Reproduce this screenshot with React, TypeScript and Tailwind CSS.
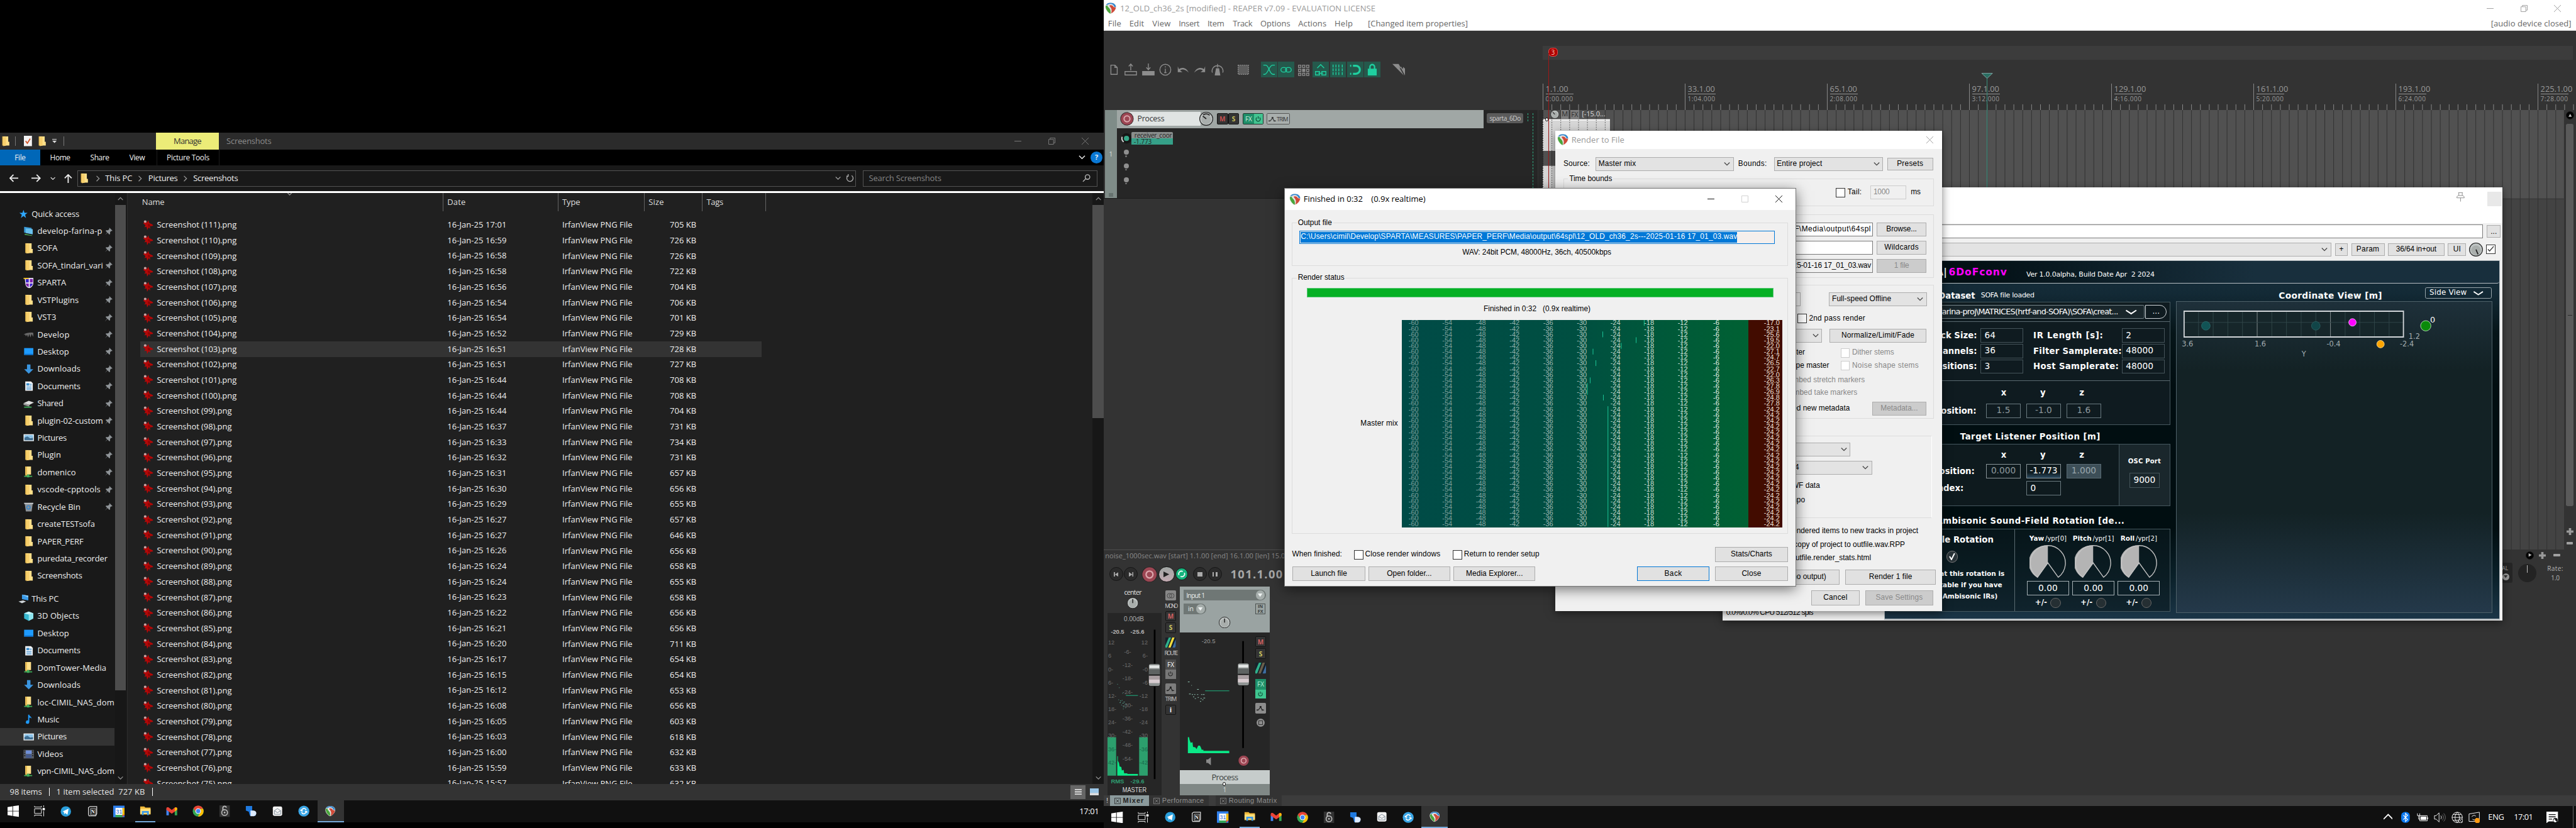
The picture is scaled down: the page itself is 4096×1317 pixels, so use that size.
import React, { useLayoutEffect, useRef } from "react";

type Kids = { children?: React.ReactNode; className?: string };

/* Text spread evenly over the width that its class gives. */
function T({ children, className = "" }: { children: string; className?: string }) {
  const outer = useRef<HTMLSpanElement>(null);
  const inner = useRef<HTMLSpanElement>(null);
  useLayoutEffect(() => {
    const o = outer.current;
    const i = inner.current;
    if (!o || !i) return;
    i.style.letterSpacing = "0px";
    const box = o.getBoundingClientRect().width;
    const k = box / parseFloat(getComputedStyle(o).width);
    const d = (box - i.getBoundingClientRect().width) / k;
    i.style.letterSpacing = `${d / children.length}px`;
  }, [children]);
  return (
    <span ref={outer} className={"inline-block shrink-0 whitespace-pre leading-none " + className}>
      <span ref={inner} className="inline-block">
        {children}
      </span>
    </span>
  );
}

/* ------------------------------------------------------------------ icons */

function ReaperLogo({ className = "" }: Kids) {
  return (
    <svg viewBox="0 0 20 20" className={"shrink-0 " + className}>
      <path d="M10 0C4 0 0.5 3 0.5 8c0 5 4.5 10 9 12 5-2 10-7 10-12 0-5-4-8-9.500-8z" fill="#e4e4e4" />
      <path d="M10 .5C5.500 .5 2.500 2.200 1.500 5l5-2c5-1.500 9 1 9.500 4.500l3 .5c0-4.500-4-7.500-9-7.500z" fill="#2f86d0" />
      <path d="M1 6C1 12 5 17 9.500 19.500c1-5-.5-8.500-4-11.500-1.500-1.500-1-2.500 0-3.200z" fill="#4aa63c" />
      <path d="M8 5c-1 1.500 3 3.500 3.500 7.500.3 2.500-.3 4.500-1 6.500 4.500-2 8-6 8.300-10.500L15 8c-1-3-4-4-7-3z" fill="#d04a38" />
    </svg>
  );
}

function Folder({ className = "" }: Kids) {
  return (
    <svg viewBox="0 0 18 20" className={"shrink-0 " + className}>
      <path d="M3 1h7v17H3z" fill="#e9bd55" />
      <path d="M5 1h9v10h2v7H5z" fill="#ffe08a" />
      <path d="M5 3l5-2v17l-5 1z" fill="#f7cf6c" />
    </svg>
  );
}

function NavIcon({ kind }: { kind: string }) {
  const cls = "h-5 w-[19px] shrink-0";
  switch (kind) {
    case "star":
      return (
        <svg viewBox="0 0 18 18" className="h-[18px] w-4 shrink-0">
          <path d="M9 1l2 6h6l-4.800 3.700L14 17l-5-3.900L4 17l1.800-6.300L1 7h6z" fill="#2ea8ff" />
        </svg>
      );
    case "folder":
      return <Folder className={cls} />;
    case "foldernet":
      return (
        <svg viewBox="0 0 18 20" className={cls}>
          <path d="M3 0h10v14H3z" fill="#ffe08a" />
          <path d="M3 0h3v16H3z" fill="#e9bd55" />
          <path d="M1 16h14v2H1zM6 14h4v5H6z" fill="#3fae5a" />
        </svg>
      );
    case "net":
      return (
        <svg viewBox="0 0 18 20" className={cls}>
          <path d="M1 3l13 2v10L1 13z" fill="#3b9bd8" />
          <path d="M4 6l12 1v9l-12-2z" fill="#69c0ec" />
          <path d="M2 15l13 3v1L2 17z" fill="#4fb35a" />
        </svg>
      );
    case "shield":
      return (
        <svg viewBox="0 0 18 20" className={cls}>
          <path d="M2 1h15v9c0 5-4 8-7 9-4-1-7-4-7-9z" fill="#e8e0f0" />
          <path d="M4 3h5v6H4zM11 11h5c-.5 3-3 5-5 6z" fill="#3a22c8" />
          <path d="M11 3h5v6h-5zM4 11h5v6c-3-1-5-3-5-6z" fill="#7a1fae" />
          <path d="M0 1h9v2H0z" fill="#f0c020" />
        </svg>
      );
    case "drive":
      return (
        <svg viewBox="0 0 18 20" className={cls}>
          <path d="M0 10c4-3 12-4 17-3v7l-3-5-2 6-2-6-2 6-2-5-2 3-1-3z" fill="#6a6a6a" />
        </svg>
      );
    case "desktop":
      return (
        <svg viewBox="0 0 18 20" className={cls}>
          <path d="M1 4h16v12H1z" fill="#1e9bff" />
          <path d="M1 14h16v2H1z" fill="#0d6fc9" />
        </svg>
      );
    case "download":
      return (
        <svg viewBox="0 0 18 20" className={cls}>
          <path d="M6 2h6v8h5l-8 8-8-8h5z" fill="#3b96e0" />
        </svg>
      );
    case "doc":
      return (
        <svg viewBox="0 0 18 20" className={cls}>
          <path d="M3 2h10l3 3v13H3z" fill="#f4f6f8" />
          <path d="M5 5h5v4H5zM11 6h3v1h-3zM5 11h9v1H5zM5 13h9v1H5zM5 15h9v1H5zM11 8h3v1h-3z" fill="#3c8fcf" />
        </svg>
      );
    case "shared":
      return (
        <svg viewBox="0 0 18 20" className={cls}>
          <path d="M0 9l9-4 9 3-8 4z" fill="#dcdcdc" />
          <path d="M0 9l10 3v3L0 12z" fill="#9b9b9b" />
          <path d="M1 15h13v2H1z" fill="#3fae5a" />
        </svg>
      );
    case "pics":
      return (
        <svg viewBox="0 0 18 20" className={cls}>
          <path d="M0 4h18v12H0z" fill="#eef4f8" />
          <path d="M1.500 5.500h15v5h-15z" fill="#8cc4ea" />
          <path d="M1.500 10l5-2 5 3 5-1v4.500h-15z" fill="#3d6d92" />
        </svg>
      );
    case "bin":
      return (
        <svg viewBox="0 0 18 20" className={cls}>
          <path d="M2 4h14l-2 14H4z" fill="#8c9298" />
          <path d="M1 3h16v2H1z" fill="#c9ced2" />
          <circle cx="8.500" cy="11" r="3" fill="none" stroke="#2f86d0" strokeWidth="1.500" />
        </svg>
      );
    case "pc":
      return (
        <svg viewBox="0 0 18 20" className={cls}>
          <path d="M6 3l11 2v8L6 11z" fill="#3b9be8" />
          <path d="M6 3l11 2v3z" fill="#8fd0ff" />
          <path d="M0 15l8-2 5 2-7 3z" fill="#d0d6da" />
        </svg>
      );
    case "cube":
      return (
        <svg viewBox="0 0 18 20" className={cls}>
          <path d="M9 2l8 3v9l-8 4-8-4V5z" fill="#36b7cf" />
          <path d="M9 7l8-2v9l-8 4z" fill="#8ce4ef" />
          <path d="M1 5l8-3 8 3-8 2z" fill="#c6f3f7" />
        </svg>
      );
    case "music":
      return (
        <svg viewBox="0 0 18 20" className={cls}>
          <path d="M8 2h2c0 3 4 3 4 7-1-2-2-2-4-2v8a3 3 0 1 1-2-3z" fill="#1e9bff" />
        </svg>
      );
    default:
      return (
        <svg viewBox="0 0 18 20" className={cls}>
          <path d="M0 3h18v15H0z" fill="#5a5f66" />
          <path d="M4 4h10v6H4z" fill="#6f8fd8" />
          <path d="M4 11h10v6H4z" fill="#43598c" />
          <path d="M1 4h2v2H1zM1 8h2v2H1zM1 12h2v2H1zM15 4h2v2h-2zM15 8h2v2h-2zM15 12h2v2h-2z" fill="#222" />
        </svg>
      );
  }
}

function Pin() {
  return (
    <svg viewBox="0 0 14 14" className="h-[13px] w-[13px] shrink-0">
      <path d="M8 0l6 6-1.500.5-1-.3-2 2.300V12L8 13 4.800 9.500 0 14l4-5L1 6l1.500-1h3L8 3z" fill="#8f9498" />
    </svg>
  );
}

function Splat() {
  return (
    <svg viewBox="0 0 20 20" className="h-5 w-[19px] shrink-0">
      <path d="M3 3l5 2 2-4 2 5 6 3 1 2-6 1 1 5-3-3-3 5-1-6-4 1 2-4-4-3z" fill="#b40808" />
      <path d="M9 8l4 0 1 4-4 1z" fill="#8c0404" />
      <circle cx="4.500" cy="3.500" r="2.400" fill="#c9a0a0" />
    </svg>
  );
}

function Chevron({ className = "", d = "M1 3l5 5 5-5" }: { className?: string; d?: string }) {
  return (
    <svg viewBox="0 0 12 12" className={"shrink-0 fill-none " + className}>
      <path d={d} stroke="currentColor" strokeWidth="1.500" />
    </svg>
  );
}

function WinButtons({ className = "" }: Kids) {
  return (
    <div className={"flex items-center " + className}>
      <svg viewBox="0 0 12 12" className="h-3 w-3 fill-none stroke-current">
        <path d="M0 6h12" />
      </svg>
      <svg viewBox="0 0 12 12" className="ml-[47px] h-3 w-3 fill-none stroke-current">
        <path d="M.5 3h8.500v8.500H.5zM3 3V.5h8.500V9H9" />
      </svg>
      <svg viewBox="0 0 12 12" className="ml-[46px] h-3 w-3 fill-none stroke-current">
        <path d="M0 0l12 12M12 0L0 12" />
      </svg>
    </div>
  );
}

/* ---------------------------------------------------------------- taskbar */

const appIcons: React.ReactNode[] = [
  <svg key="win" viewBox="0 0 20 20" className="h-5 w-5">
    <path d="M0 3l8.500-1.300V9.500H0zM9.500 1.500L20 0v9.500H9.500zM0 10.500h8.500v7.800L0 17zM9.500 10.500H20V20L9.500 18.500z" fill="#fff" />
  </svg>,
  <svg key="view" viewBox="0 0 20 20" className="h-5 w-5 fill-none stroke-white">
    <path d="M1 6h12v8H1zM1 1v2h12V1M1 19v-2h12v2M17 0v3M17 10v9" />
    <path d="M15.500 5h3v3h-3z" fill="#fff" />
  </svg>,
  <svg key="tg" viewBox="0 0 20 20" className="h-[19px] w-[19px]">
    <circle cx="10" cy="10" r="9.500" fill="#2a9fdc" />
    <path d="M4 10l11-5-2 11-4-3-2 2-.5-4z" fill="#fff" />
  </svg>,
  <svg key="notion" viewBox="0 0 20 20" className="h-[18px] w-[18px]">
    <path d="M2 3l3-2h13v14l-2 4H3l-1-3z" fill="#111" stroke="#ddd" strokeWidth="1.500" />
    <path d="M6 5h10v12H6z" fill="none" stroke="#ddd" />
    <text x="7" y="15" fontSize="10" fontFamily="Liberation Serif, serif" fontWeight="700" fill="#fff">N</text>
  </svg>,
  <svg key="cal" viewBox="0 0 20 20" className="h-[21px] w-[20px]">
    <path d="M0 0h20v20H0z" fill="#2f80ed" />
    <path d="M16 4h4v12h-4z" fill="#fbbc04" />
    <path d="M4 16h12v4H4z" fill="#34a853" />
    <path d="M16 16h4l-4 4z" fill="#ea4335" />
    <path d="M4 4h12v12H4z" fill="#fff" />
    <text x="5" y="13.500" fontSize="9.500" fontFamily="Liberation Sans, sans-serif" fill="#1a66d6">31</text>
  </svg>,
  <svg key="folder" viewBox="0 0 20 20" className="h-[20px] w-[20px]">
    <path d="M1 3h7l2 2h9v12H1z" fill="#f0b93a" />
    <path d="M1 7h18v9H1z" fill="#ffdf7a" />
    <path d="M4 11h12v7h-3v-4H7v4H4z" fill="#3c9be8" />
  </svg>,
  <svg key="gmail" viewBox="0 0 20 16" className="h-[15px] w-[20px]">
    <path d="M0 3h4.500v12H0z" fill="#4285f4" />
    <path d="M15.500 3H20v12h-4.500z" fill="#34a853" />
    <path d="M0 2c0-2 3-3 4.500-1.500L10 5l5.500-4.500C17 -1 20 0 20 2v3l-10 7L0 5z" fill="#ea4335" />
    <path d="M15.500 1c2-1.600 4.500-.5 4.500 1.500v2L15.500 8z" fill="#fbbc04" />
  </svg>,
  <svg key="chrome" viewBox="0 0 20 20" className="h-[20px] w-[20px]">
    <circle cx="10" cy="10" r="9.500" fill="#34a853" />
    <path d="M10 .5A9.500 9.500 0 0 1 18.500 6H10L6 12 1.800 5.200A9.500 9.500 0 0 1 10 .5z" fill="#ea4335" />
    <path d="M18.500 6a9.500 9.500 0 0 1-9 13.500L14 12V6z" fill="#fbbc04" />
    <circle cx="10" cy="10" r="4.800" fill="#fff" />
    <circle cx="10" cy="10" r="3.600" fill="#4285f4" />
  </svg>,
  <svg key="lock" viewBox="0 0 20 20" className="h-[20px] w-[20px] fill-none">
    <path d="M1 0h18v20H1z" fill="#333" />
    <path d="M7 8V5a3 3 0 0 1 6-1" stroke="#bbb" strokeWidth="2" />
    <circle cx="10" cy="12.500" r="5" stroke="#bbb" strokeWidth="1.800" />
    <circle cx="10" cy="12.500" r="1.500" fill="#bbb" />
  </svg>,
  <svg key="bird" viewBox="0 0 20 20" className="h-[20px] w-[20px]">
    <path d="M1 1h11v8l6 3v6H8l-2-7-5-2z" fill="#1f7ae0" />
    <path d="M9 9h4c4 0 7 2 6 6-1 3-3 4-6 4H9z" fill="#dceaff" />
  </svg>,
  <svg key="mail" viewBox="0 0 20 20" className="h-[18px] w-[18px]">
    <rect x="1" y="1" width="18" height="18" rx="3" fill="#f4f4f4" />
    <path d="M4 9l6-4 6 4v7H4zM4 9l6 4 6-4" fill="none" stroke="#6a7a88" />
  </svg>,
  <svg key="blue" viewBox="0 0 20 20" className="h-[20px] w-[20px] fill-none">
    <circle cx="10" cy="10" r="9.500" fill="#3aa6e6" />
    <path d="M5 10c3-6 7-6 9-2M15 10c-3 6-7 6-9 2M4 8l4 2M16 12l-4-2" stroke="#fff" strokeWidth="1.800" />
  </svg>,
  <ReaperLogo key="reaper" className="h-[20px] w-[18px]" />,
];

function Taskbar({ className = "", children }: Kids) {
  return (
    <div className={"flex items-stretch bg-[#101010] " + className}>
      {appIcons.map((icon, i) => (
        <div
          key={i}
          className={
            "flex w-[46px] shrink-0 flex-col items-center justify-center " +
            (i === 12 ? "border-b-[3px] border-[#76a9da] bg-[#333]" : "")
          }
        >
          <div className={"flex flex-1 items-center " + (i === 12 ? "pt-[2px]" : "")}>{icon}</div>
          {i === 5 && <div className="h-[3px] w-[35px] bg-[#76a9da]" />}
        </div>
      ))}
      <div className="flex-1" />
      {children}
    </div>
  );
}

/* --------------------------------------------------------------- explorer */

const nav: [string, string, string, boolean][] = [
  ["net", "develop-farina-p", "w-[113px]", true],
  ["folder", "SOFA", "w-[35px]", true],
  ["folder", "SOFA_tindari_vari", "w-[114px]", true],
  ["shield", "SPARTA", "w-[50px]", true],
  ["folder", "VSTPlugins", "w-[72px]", true],
  ["folder", "VST3", "w-[33px]", true],
  ["drive", "Develop", "w-[56px]", true],
  ["desktop", "Desktop", "w-[55px]", true],
  ["download", "Downloads", "w-[75px]", true],
  ["doc", "Documents", "w-[75px]", true],
  ["shared", "Shared", "w-[45px]", true],
  ["folder", "plugin-02-custom", "w-[114px]", true],
  ["pics", "Pictures", "w-[51px]", true],
  ["folder", "Plugin", "w-[41px]", true],
  ["foldernet", "domenico", "w-[67px]", true],
  ["folder", "vscode-cpptools", "w-[110px]", true],
  ["bin", "Recycle Bin", "w-[75px]", true],
  ["folder", "createTESTsofa", "w-[100px]", false],
  ["folder", "PAPER_PERF", "w-[80px]", false],
  ["folder", "puredata_recorder", "w-[122px]", false],
  ["folder", "Screenshots", "w-[78px]", false],
];
const pcNav: [string, string, string][] = [
  ["cube", "3D Objects", "w-[73px]"],
  ["desktop", "Desktop", "w-[55px]"],
  ["doc", "Documents", "w-[75px]"],
  ["foldernet", "DomTower-Media", "w-[120px]"],
  ["download", "Downloads", "w-[75px]"],
  ["foldernet", "loc-CIMIL_NAS_dom", "w-[134px]"],
  ["music", "Music", "w-[38px]"],
  ["pics", "Pictures", "w-[51px]"],
  ["video", "Videos", "w-[45px]"],
  ["foldernet", "vpn-CIMIL_NAS_dom", "w-[134px]"],
];
const files: [string, number][] = [
  ["17:01", 705], ["16:59", 726], ["16:58", 726], ["16:58", 722], ["16:56", 704], ["16:54", 706],
  ["16:54", 701], ["16:52", 729], ["16:51", 728], ["16:51", 727], ["16:44", 708], ["16:44", 708],
  ["16:44", 704], ["16:37", 731], ["16:33", 734], ["16:32", 731], ["16:31", 657], ["16:30", 656],
  ["16:29", 655], ["16:27", 657], ["16:27", 646], ["16:26", 656], ["16:24", 658], ["16:24", 655],
  ["16:23", 658], ["16:22", 656], ["16:21", 656], ["16:20", 711], ["16:17", 654], ["16:15", 654],
  ["16:12", 653], ["16:08", 656], ["16:05", 603], ["16:03", 618], ["16:00", 632], ["15:59", 633],
  ["15:57", 632],
];

function Explorer() {
  return (
    <div className="flex h-[1161px] w-[1920px] flex-col bg-[#202020] text-[14.2px] text-[#f0f0f0]">
      <div className="flex h-[29px] shrink-0 items-center bg-[#2b2b2b]">
        <Folder className="ml-px h-[19px] w-[17px]" />
        <div className="ml-[8px] h-[16px] w-px bg-[#777]" />
        <svg viewBox="0 0 14 18" className="ml-[15px] h-[18px] w-[14px]">
          <path d="M0 0h14v18H0z" fill="#f3f3f3" />
          <path d="M3 9l3 4 5-8" fill="none" stroke="#d2572c" strokeWidth="2" />
        </svg>
        <Folder className="ml-[9px] h-[19px] w-[17px]" />
        <svg viewBox="0 0 8 8" className="ml-[9px] h-2 w-2">
          <path d="M0 0h8v1H0zM0 3h8L4 7z" fill="#ddd" />
        </svg>
        <div className="ml-[12px] h-[16px] w-px bg-[#777]" />
        <div className="ml-[159px] flex h-full w-[110px] items-center justify-center bg-[#ecec78] text-[#333]">
          <T className="w-[48px]">Manage</T>
        </div>
        <T className="ml-[13px] w-[78px] text-[#8c8c8c]">Screenshots</T>
        <div className="flex-1" />
        <WinButtons className="mr-[27px] text-[#808080]" />
      </div>
      <div className="flex h-[28px] shrink-0 items-center bg-black text-[13px]">
        <div className="flex h-full w-[70px] items-center justify-center bg-[#0067b8]">
          <T className="w-[19px]">File</T>
        </div>
        <T className="ml-[17px] w-[35px]">Home</T>
        <T className="ml-[35px] w-[33px]">Share</T>
        <T className="ml-[35px] w-[27px]">View</T>
        <div className="ml-[20px] flex h-full w-[110px] items-center justify-center border-x border-[#1c1c1c]">
          <T className="w-[74px]">Picture Tools</T>
        </div>
        <div className="flex-1" />
        <Chevron className="mr-[9px] h-3 w-3" />
        <div className="mr-[3px] flex h-5 w-5 items-center justify-center rounded-full bg-[#0a78d4] text-[12px] font-bold">?</div>
      </div>
      <div className="flex h-[45px] shrink-0 items-center bg-[#191919]">
        <svg viewBox="0 0 16 14" className="ml-[16px] h-[14px] w-[16px] fill-none stroke-[#eee] stroke-2">
          <path d="M16 7H1M7 1L1 7l6 6" />
        </svg>
        <svg viewBox="0 0 16 14" className="ml-[23px] h-[14px] w-[16px] fill-none stroke-[#eee] stroke-2">
          <path d="M0 7h15M9 1l6 6-6 6" />
        </svg>
        <Chevron className="ml-[17px] h-[9px] w-[9px]" />
        <svg viewBox="0 0 14 16" className="ml-[15px] h-[16px] w-[14px] fill-none stroke-[#eee] stroke-2">
          <path d="M7 16V1M1 7l6-6 6 6" />
        </svg>
        <div className="ml-[9px] flex h-[28px] w-[1354px] items-center border border-[#535353]">
          <Folder className="ml-[2px] h-[19px] w-[17px]" />
          <Chevron className="ml-[10px] h-[11px] w-[11px] text-[#999]" d="M3 1l5 5-5 5" />
          <T className="ml-[7px] w-[47px]">This PC</T>
          <Chevron className="ml-[9px] h-[11px] w-[11px] text-[#999]" d="M3 1l5 5-5 5" />
          <T className="ml-[8px] w-[51px]">Pictures</T>
          <Chevron className="ml-[8px] h-[11px] w-[11px] text-[#999]" d="M3 1l5 5-5 5" />
          <T className="ml-[8px] w-[78px]">Screenshots</T>
          <div className="flex-1" />
          <Chevron className="h-[10px] w-[10px] text-[#aaa]" />
          <svg viewBox="0 0 14 14" className="ml-[8px] mr-[3px] h-[14px] w-[14px] fill-none stroke-[#aaa] stroke-[1.5]">
            <path d="M10 2.500A5.500 5.500 0 1 1 4 2.600M4 0v3.500h-3" />
          </svg>
        </div>
        <div className="ml-[12px] flex h-[28px] w-[408px] items-center border border-[#535353] text-[#858585]">
          <T className="ml-[9px] w-[126px]">Search Screenshots</T>
          <div className="flex-1" />
          <svg viewBox="0 0 14 14" className="mr-[11px] h-[14px] w-[14px] fill-none stroke-[#bbb] stroke-[1.5]">
            <circle cx="9" cy="5" r="4" />
            <path d="M6 8l-5 5" />
          </svg>
        </div>
      </div>
      <div className="h-[3px] shrink-0 bg-white" />
      <div className="flex h-[1028px] shrink-0">
        <div className="flex w-[200px] shrink-0 flex-col bg-[#191919] pt-[21px]">
          <div className="flex h-[30px] shrink-0 items-center pl-[33px]">
            <NavIcon kind="star" />
            <T className="ml-[6px] w-[83px]">Quick access</T>
          </div>
          {nav.map(([kind, name, width, pinned]) => (
            <div key={name} className="flex h-[30px] shrink-0 items-center pl-[41px] pr-[4px]">
              <NavIcon kind={kind} />
              <T className={"ml-[5px] " + width}>{name}</T>
              <div className="flex-1" />
              {pinned && <Pin />}
            </div>
          ))}
          <div className="mt-[10px] flex h-[30px] shrink-0 items-center pl-[32px]">
            <NavIcon kind="pc" />
            <T className="ml-[4px] w-[47px]">This PC</T>
          </div>
          {pcNav.map(([kind, name, width]) => (
            <div
              key={name}
              className={"flex h-[30px] w-[199px] shrink-0 items-center pl-[41px] " + (name === "Pictures" ? "bg-[#333]" : "")}
            >
              <NavIcon kind={kind} />
              <T className={"ml-[5px] " + width}>{name}</T>
            </div>
          ))}
        </div>
        <div className="flex w-[19px] shrink-0 flex-col items-center bg-[#171717] text-[#999]">
          <div className="flex h-[21px] items-center"><Chevron className="h-[10px] w-[10px]" d="M1 8l5-5 5 5" /></div>
          <div className="h-[844px] w-full bg-[#4d4d4d]" />
          <div className="flex-1" />
          <div className="flex h-[21px] items-center"><Chevron className="h-[10px] w-[10px]" /></div>
        </div>
        <div className="w-[3px] shrink-0 border-r border-[#2d2d2d] bg-[#191919]" />
        <div className="flex w-[1678px] flex-col overflow-hidden">
          <div className="flex h-[32px] shrink-0 items-center text-[#dedede]">
            <T className="ml-[25px] w-[39px]">Name</T>
            <Chevron className="ml-[213px] mb-[28px] h-[10px] w-[10px] text-[#999]" />
            <div className="ml-[261px] h-full w-px bg-[#636363]" />
            <T className="ml-[7px] w-[32px]">Date</T>
            <div className="ml-[160px] h-full w-px bg-[#636363]" />
            <T className="ml-[7px] w-[31px]">Type</T>
            <div className="ml-[111px] h-full w-px bg-[#636363]" />
            <T className="ml-[7px] w-[27px]">Size</T>
            <div className="ml-[66px] h-full w-px bg-[#636363]" />
            <T className="ml-[7px] w-[29px]">Tags</T>
            <div className="ml-[73px] h-full w-px bg-[#636363]" />
          </div>
          <div className="h-[10px] shrink-0" />
          {files.map(([time, size], i) => (
            <div
              key={i}
              className={"ml-[22px] flex h-[27px] w-[1081px] shrink-0 items-center " + (i === 8 ? "bg-[#333]" : "")}
            >
              <div className="ml-[4px] flex w-[530px] items-center">
                <Splat />
                <T className={"ml-[6px] " + (i < 12 ? "w-[138.500px]" : "w-[130px]")}>{`Screenshot (${111 - i}).png`}</T>
              </div>
              <div className="w-[200px]"><T className="w-[103px]">{`16-Jan-25 ${time}`}</T></div>
              <T className="w-[122px]">IrfanView PNG File</T>
              <div className="flex w-[111px] justify-end"><T className="w-[46px]">{`${size} KB`}</T></div>
            </div>
          ))}
        </div>
        <div className="flex w-[20px] shrink-0 flex-col items-center bg-[#171717] text-[#999]">
          <div className="flex h-[21px] items-center"><Chevron className="h-[10px] w-[10px]" d="M1 8l5-5 5 5" /></div>
          <div className="h-[370px] w-full bg-[#4d4d4d]" />
          <div className="flex-1" />
          <div className="flex h-[21px] items-center"><Chevron className="h-[10px] w-[10px]" /></div>
        </div>
      </div>
      <div className="z-10 flex h-[28px] shrink-0 items-center bg-[#333] text-[#e4e4e4]">
        <T className="ml-[17px] w-[56px]">98 items</T>
        <div className="ml-[12px] h-[14px] w-px bg-white" />
        <T className="ml-[12px] w-[154px]">1 item selected  727 KB</T>
        <div className="ml-[13px] h-[14px] w-px bg-white" />
        <div className="flex-1" />
        <div className="flex h-[24px] w-[26px] items-center justify-center bg-[#666]">
          <svg viewBox="0 0 12 12" className="h-3 w-3"><path d="M0 1h12v2H0zM0 5h12v2H0zM0 9h12v2H0z" fill="#ddd" /></svg>
        </div>
        <div className="mr-[2px] flex h-[24px] w-[30px] items-center justify-center">
          <svg viewBox="0 0 16 12" className="h-3 w-4"><path d="M0 0h16v12H0z" fill="#9cc7e8" /><path d="M0 8h16v4H0z" fill="#ddd" /></svg>
        </div>
      </div>
    </div>
  );
}

/* ----------------------------------------------------------------- reaper */

function Tb({ on, children }: { on?: boolean; children: React.ReactNode }) {
  return (
    <div className={"mr-[2px] flex h-[28px] w-[28px] shrink-0 items-center justify-center " + (on ? "bg-[#25594c] text-[#1fd0a0]" : "text-[#8d8d8d]")}>
      <svg viewBox="0 0 24 24" className="h-6 w-6 fill-none stroke-current stroke-[1.5]">{children}</svg>
    </div>
  );
}

function Knob({ className = "", dir = "M10 10V3" }: { className?: string; dir?: string }) {
  return (
    <svg viewBox="0 0 20 20" className={"shrink-0 " + className}>
      <circle cx="10" cy="10" r="9.500" fill="#bfc4c3" stroke="#1d1d1d" />
      <circle cx="10" cy="11" r="7" fill="#a9aeac" />
      <path d={dir} fill="none" stroke="#222" strokeWidth="1.600" />
    </svg>
  );
}

function RecDot({ className = "" }: Kids) {
  return (
    <svg viewBox="0 0 28 28" className={"shrink-0 " + className}>
      <circle cx="14" cy="14" r="13.500" fill="#222" />
      <circle cx="14" cy="14" r="12.500" fill="#9c4653" />
      <circle cx="14" cy="14" r="6" fill="none" stroke="#dba6ac" strokeWidth="2.500" />
    </svg>
  );
}

function DarkBtn({ children, className = "" }: Kids) {
  return (
    <div className={"flex shrink-0 items-center justify-center rounded-[2px] border border-[#141414] bg-[#343434] text-[11px] font-bold leading-none " + className}>
      {children}
    </div>
  );
}

function TrackPanel() {
  return (
    <div className="flex h-[155px] shrink-0 border-b border-[#1c1c1c]">
      <div className="ml-[2px] flex w-[20px] shrink-0 flex-col items-center bg-[#7f8c88] pt-[70px] text-[12px] text-[#d5dbd9]">
        <div className="leading-[14px]">1</div>
        <div className="flex-1" />
        <div className="mb-[3px] h-[6px] w-[8px] bg-[#66726f]" />
      </div>
      <div className="flex w-[638px] shrink-0 flex-col bg-[#262626]">
        <div className="flex h-[32px] shrink-0 items-center bg-[#a0a7a5]">
          <RecDot className="z-10 ml-[6px] h-6 w-6" />
          <div className="-ml-[10px] flex h-[24px] w-[126px] items-center bg-[#e0e4e3] pl-[16px] text-[13.500px] text-[#333]">
            <T className="w-[47px]">Process</T>
          </div>
          <Knob className="-ml-[2px] h-6 w-6" dir="M10 10L5 6M15 5a7 7 0 0 0-9.500-.5" />
          <DarkBtn className="ml-[6px] h-[20px] w-[20px] text-[#c15050]">M</DarkBtn>
          <DarkBtn className="h-[20px] w-[19px] text-[#c9c05a]">S</DarkBtn>
          <div className="ml-[6px] flex h-[20px] w-[36px] items-center rounded-[2px] border border-[#20332c] bg-[#1f8f69] text-[11px] text-[#d0f0e0]">
            <span className="w-[19px] text-center">FX</span>
            <span className="flex h-full flex-1 items-center justify-center bg-[#43c491]"><Power className="h-[10px] w-[10px] stroke-[#0d4433]" /></span>
          </div>
          <div className="ml-[6px] flex h-[20px] w-[40px] items-center justify-center rounded-[2px] border border-[#555] bg-[#a9afad] text-[10px] text-[#3a3a3a]">
            <Env className="h-[10px] w-[14px]" />
            <T className="w-[19px]">TRIM</T>
          </div>
        </div>
        <div className="mt-[7px] flex h-[22px] items-center">
          <svg viewBox="0 0 18 18" className="ml-[8px] h-[18px] w-[18px]">
            <circle cx="9" cy="9" r="9" fill="#161616" />
            <circle cx="9" cy="9" r="4.500" fill="#35a888" />
            <path d="M1.500 6a8 8 0 0 0 2.500 9" fill="none" stroke="#ddd" strokeWidth="2" />
          </svg>
          <div className="h-[22px] w-[72px] rounded-[2px] bg-[#8a8e8d] text-[11px] leading-none text-[#222]">
            <div className="flex h-[11px] items-center pl-[5px]"><T className="w-[65px]">receiver_coor</T></div>
            <div className="flex h-[11px] items-center bg-[#35a088] pl-[4px]"><T className="w-[31px]">-1.773</T></div>
          </div>
        </div>
        <div className="mt-[8px] flex flex-col gap-[11px]">
          {[0, 1, 2].map((n) => (
            <div key={n} className="ml-[12px] flex h-[13px] w-[9px] flex-col items-center justify-between">
              <div className="h-[9px] w-[9px] rounded-full bg-[#8f8f8f]" />
              <div className="h-[3px] w-[3px] rounded-full bg-[#777]" />
            </div>
          ))}
        </div>
      </div>
      <div className="flex w-[94px] shrink-0 bg-[#262626] pt-[6px]">
        <div className="ml-[6px] flex h-[17px] w-[63px] items-center justify-center rounded-[3px] bg-[#5b5b5b] text-[11px] text-[#cfcfcf]">
          <T className="w-[54px]">sparta_6Do</T>
        </div>
        <div className="ml-[8px] h-[14px] border-l border-dashed border-[#2fae84]" />
        <div className="ml-[7px] h-[148px] border-l border-dashed border-[#2fae84]" />
      </div>
    </div>
  );
}

function Power({ className = "" }: Kids) {
  return (
    <svg viewBox="0 0 12 12" className={"fill-none " + className}>
      <path d="M6 0v5M3 2.500a4.500 4.500 0 1 0 6 0" strokeWidth="1.500" />
    </svg>
  );
}

function Env({ className = "" }: Kids) {
  return (
    <svg viewBox="0 0 14 10" className={"fill-none stroke-current " + className}>
      <path d="M1 8h2l4-5 3 5h3" strokeWidth="1.300" />
      <path d="M5.500 1h3v3h-3zM0 7h2v2H0zM9 7h2v2H9z" fill="currentColor" stroke="none" />
    </svg>
  );
}

function RouteIcon({ dim, className = "" }: { dim?: boolean; className?: string }) {
  return (
    <svg viewBox="0 0 18 18" className={"shrink-0 " + className}>
      <path d="M0 0h18v18H0z" fill="#17212b" />
      <path d="M0 14L6 0h4L3 18H0z" fill="#2fb08a" />
      <path d="M5 18L12 0h4L9 18z" fill={dim ? "#6b5f4a" : "#f3dd3c"} />
      <path d="M12 18L18 3v12l-1 3z" fill="#3d6da0" />
    </svg>
  );
}

const majorTicks: [string, string][] = [
  ["1.1.00", "0:00.000"],
  ["33.1.00", "1:04.000"],
  ["65.1.00", "2:08.000"],
  ["97.1.00", "3:12.000"],
  ["129.1.00", "4:16.000"],
  ["161.1.00", "5:20.000"],
  ["193.1.00", "6:24.000"],
  ["225.1.00", "7:28.000"],
];
const beats = Array.from({ length: 117 }, (_, i) => i * 15.45);

function Ruler() {
  return (
    <div className="relative h-[46px] w-[1797px] overflow-hidden">
      <svg className="absolute inset-0 h-[46px] w-[1797px]">
        {beats.map((x, i) => (
          <path key={i} d={`M${x + 0.5} ${i % 16 ? 36 : 0}V46`} stroke="#909090" />
        ))}
      </svg>
      <div className="flex">
        {majorTicks.map(([bar, time]) => (
          <div key={bar} className="w-[247.200px] shrink-0 pl-[5px] pt-[3px] text-[#999]">
            <div className="w-[49px] border-b border-[#949494] text-[14px] leading-[15px]">{bar}</div>
            <div className="text-[11px] leading-[17px]">
              <T className="w-[48px]">{time}</T>
            </div>
          </div>
        ))}
      </div>
    </div>
  );
}

function Arrange() {
  return (
    <div className="relative h-[765px] w-[1776px] shrink-0 overflow-hidden bg-[#434343]">
      <svg className="absolute inset-0 h-[765px] w-[1776px]">
        <path d="M0 0h1776v154H0z" fill="#515151" />
        {beats.map((x, i) => (
          <path key={i} d={`M${x + 0.5} 0V765`} stroke="#303030" />
        ))}
        <path d="M0 154.500h1776" stroke="#363636" />
        <path d="M0 16h117v55H0zM0 97h117v57H0z" fill="#d6d6d6" />
        <path d="M0 16h117v2H0z" fill="#fff" />
        {[1, 2, 3, 4, 5, 6, 7].map((n) => (
          <path key={n} d={`M${n * 15.45 + 0.5} 17V71M${n * 15.45 + 0.5} 97V154`} stroke="#555" strokeDasharray="2 2" />
        ))}
        <path d="M.5 0V154" stroke="#222" strokeDasharray="2 2" />
      </svg>
      <div className="relative flex h-[16px] items-center gap-[3px] pl-[13px] text-[12px] leading-none">
        <Knob className="h-[15px] w-[16px]" dir="M10 10L5 5" />
        <div className="flex h-[15px] w-[13px] items-center justify-center bg-[#7d7d7d] text-[#2b2b2b]">M</div>
        <div className="flex h-[15px] w-[15px] items-center justify-center bg-[#7d7d7d] text-[11px] text-[#2b2b2b]">FX</div>
        <T className="ml-[2px] w-[41px] text-[#ddd]">[-15.0...</T>
      </div>
      <div className="relative ml-[4px] -mt-[2px] h-[6px] w-[6px] rounded-full border border-black bg-white" />
    </div>
  );
}

function RoundBtn({ children, className = "" }: Kids) {
  return (
    <div className={"flex shrink-0 items-center justify-center rounded-full border-2 border-[#161616] bg-[#2b2b2b] " + className}>
      {children}
    </div>
  );
}

function FaderCap({ className = "" }: Kids) {
  return (
    <svg viewBox="0 0 21 40" className={className}>
      <rect x="0" y="0" width="21" height="40" rx="4" fill="#222" />
      <rect x="1" y="1" width="19" height="38" rx="3" fill="#8f9493" />
      <path d="M2 3h17v5H2z" fill="#e3e6e5" />
      <path d="M1 10h19v9H1z" fill="#5e6362" />
      <path d="M1 19h19v2H1z" fill="#111" />
      <path d="M1 21h19v7H1z" fill="#a89ea1" />
      <path d="M1 28h19v6H1z" fill="#d8ccd0" />
    </svg>
  );
}

function MasterMeter() {
  const side = ["12", "6", "0", "6", "12", "18", "24", "30", "36", "42"];
  return (
    <svg viewBox="1926 1066 94 318" className="ml-[6px] h-[318px] w-[94px] bg-[#262626] font-['Liberation_Sans',sans-serif]">
      <text x="1972" y="1080" fontSize="11" fill="#aaa" textAnchor="middle">0.00dB</text>
      <text x="1932" y="1102" fontSize="10.500" fontWeight="700" fill="#b5b5b5" textLength="23">-20.5</text>
      <text x="1966" y="1102" fontSize="10.500" fontWeight="700" fill="#b5b5b5" textLength="24">-25.6</text>
      <path d="M1926 1282h15v67h-15zM1981 1282h15v67h-15z" fill="#2c9f6d" />
      {side.map((v, i) => (
        <g key={i} fontSize="10" fill={i > 7 ? "#17694a" : "#6d6d6d"}>
          <text x="1927" y={1121 + i * 23.15}>{i < 2 ? v : v + "-"}</text>
          <text x="1996" y={1121 + i * 23.15} textAnchor="end">{i < 1 ? v : i === 1 ? v + "-" : "-" + v}</text>
        </g>
      ))}
      {["-6-", "-12-", "-18-", "-24-", "-30-", "-36-", "-42-", "-48-", "-54-"].map((v, i) => (
        <text key={v} x="1961" y={1137 + i * 23.2} fontSize="10" fill="#6d6d6d" textAnchor="middle">{v}</text>
      ))}
      <path d="M1943 1349v-34h1v8l2 4 1 6 3 1 1 6 3-1 1 6h5l1 1h18v3z" fill="#0be887" />
      <path d="M1958 1209.500h21" stroke="#1fc08a" />
      <path d="M1945 1217h1M1948 1219h2M1951 1218h1M1947 1222h2M1952 1223h2M1950 1226h1M1954 1221h2M1956 1226h1M1953 1229h2M1958 1225h1M1957 1231h1M1953 1233h1M1943 1190h1M1946 1196h1M1952 1206h1" stroke="#5fb8a0" />
      <text x="1932" y="1362" fontSize="10.500" fontWeight="700" fill="#2f9b70" textLength="23">RMS</text>
      <text x="1966" y="1362" fontSize="10.500" fontWeight="700" fill="#2f9b70" textLength="24">-29.6</text>
      <text x="1952" y="1378" fontSize="11.500" fill="#ddd" textLength="42" lengthAdjust="spacingAndGlyphs">MASTER</text>
      <path d="M2006.500 1095h3v260h-3z" fill="#000" />
      <svg x="1997" y="1154" width="21" height="40"><FaderCap /></svg>
    </svg>
  );
}

function TrackMeter() {
  return (
    <svg viewBox="2052 1100 127 240" className="h-[240px] w-[127px] font-['Liberation_Sans',sans-serif]">
      <text x="2102" y="1119" fontSize="10.500" fill="#999" textAnchor="middle">-20.5</text>
      <path d="M2160.500 1115h3v186h-3z" fill="#000" />
      <svg x="2152" y="1153" width="21" height="40"><FaderCap /></svg>
      <path d="M2066 1310v-28h2l1 5 2 5 3-1 1 8 4 1 2 3 3-6h3l2 4 1 3h3v2h45v4z" fill="#0be887" />
      <path d="M2096 1201.500h42" stroke="#1fc08a" />
      <path d="M2066 1186h3M2072 1192h1M2082 1199h3M2068 1207h3M2073 1208h2M2077 1208h2M2082 1208h2M2089 1208h2M2092 1208h3M2075 1212h2M2078 1215h2M2083 1213h2M2088 1215h2M2093 1214h3M2087 1220h2M2091 1217h2" stroke="#9fd8c4" />
      <path d="M2098 1321h3l5-4v14l-5-4h-3z" fill="#8a8a8a" />
      <svg x="2153" y="1313" width="20" height="20"><RecDot /></svg>
    </svg>
  );
}

function Mixer() {
  return (
    <div className="flex h-[364px]">
      <div className="flex w-[100px] shrink-0 flex-col">
        <div className="flex h-[46px] flex-col items-center pt-[5px] text-[11.500px] text-[#e2e2e2]">
          <T className="w-[30px]">center</T>
          <Knob className="mt-[2px] h-5 w-5" />
        </div>
        <MasterMeter />
      </div>
      <div className="flex w-[32px] shrink-0 flex-col items-center pt-[7px] text-[10px] leading-none text-[#c8c8c8]">
        <div className="flex h-[18px] w-[18px] items-center justify-center rounded-[2px] bg-[#878787]">
          <svg viewBox="0 0 14 10" className="h-[10px] w-[14px] fill-none stroke-[#444]"><circle cx="5" cy="5" r="4" /><circle cx="9" cy="5" r="4" /></svg>
        </div>
        <T className="mt-[4px] w-[20px]">MONO</T>
        <DarkBtn className="mt-[4px] h-[18px] w-[18px] text-[#d06060]">M</DarkBtn>
        <DarkBtn className="mt-[2px] h-[18px] w-[18px] text-[#d0c860]">S</DarkBtn>
        <RouteIcon className="mt-[8px] h-[18px] w-[18px]" />
        <T className="mt-[4px] w-[22px]">ROUTE</T>
        <div className="mt-[6px] flex h-[18px] w-[18px] items-center justify-center bg-[#4c4c4c] text-[11px] text-white">FX</div>
        <div className="flex h-[16px] w-[18px] items-center justify-center bg-[#777]"><Power className="h-[9px] w-[9px] stroke-[#222]" /></div>
        <div className="mt-[8px] flex h-[18px] w-[18px] items-center justify-center rounded-[2px] bg-[#7d7d7d] text-[#222]"><Env className="h-[10px] w-[14px]" /></div>
        <T className="mt-[4px] w-[19px]">TRIM</T>
        <DarkBtn className="mt-[5px] h-[18px] w-[19px] text-white">i</DarkBtn>
      </div>
      <div className="flex w-[156px] shrink-0 flex-col">
        <div className="flex h-[80px] shrink-0 flex-col bg-[#9aa3a2] px-[6px] pt-[6px] text-[11.500px] text-[#e8eceb]">
          <div className="flex h-[19px] items-center justify-between rounded-[3px] rounded-r-full bg-[#6f7775] pl-[5px] pr-[2px]">
            <T className="w-[32px]">Input 1</T>
            <div className="flex h-[16px] w-[16px] items-center justify-center rounded-full bg-[#a5adab]"><Tri /></div>
          </div>
          <div className="mt-[5px] flex h-[19px] items-center">
            <div className="flex h-[19px] w-[40px] items-center justify-between rounded-[3px] rounded-r-full bg-[#6f7775] pl-[8px] pr-[2px]">
              <span className="leading-none">in</span>
              <div className="flex h-[16px] w-[16px] items-center justify-center rounded-full bg-[#a5adab]"><Tri /></div>
            </div>
            <div className="ml-[85px] flex h-[18px] w-[18px] flex-col items-center border border-[#4c5250] text-[8px] font-bold leading-[8px] text-[#3c4240]">
              <span>IN</span>
              <span>FX</span>
            </div>
          </div>
          <Knob className="mx-auto mt-[4px] h-5 w-5" />
        </div>
        <div className="flex h-[240px] shrink-0 bg-[#262626]">
          <TrackMeter />
          <div className="flex w-[27px] flex-col items-center pt-[7px]">
            <DarkBtn className="h-[19px] w-[19px] text-[#d06060]">M</DarkBtn>
            <DarkBtn className="mt-[2px] h-[18px] w-[19px] text-[#d0c860]">S</DarkBtn>
            <RouteIcon dim className="mt-[7px] h-[19px] w-[19px]" />
            <div className="mt-[9px] flex h-[19px] w-[19px] items-center justify-center bg-[#1f8f69] text-[11px] text-[#b8f0da]">FX</div>
            <div className="flex h-[15px] w-[19px] items-center justify-center bg-[#3fc690]"><Power className="h-[9px] w-[9px] stroke-[#0d4433]" /></div>
            <div className="mt-[8px] flex h-[18px] w-[18px] items-center justify-center rounded-[2px] bg-[#8d8d8d] text-[#222]"><Env className="h-[10px] w-[14px]" /></div>
            <div className="mt-[9px] flex h-[15px] w-[15px] items-center justify-center rounded-full bg-[#8d8d8d]"><div className="h-[7px] w-[7px] border border-[#333]" /></div>
          </div>
        </div>
        <div className="flex h-[24px] shrink-0 items-center justify-center bg-[#c6cccb] text-[14px] text-[#3a3e3d]">
          <T className="w-[46px]">Process</T>
        </div>
        <div className="relative flex h-[20px] shrink-0 items-center justify-center bg-[#808886] text-[12px] text-[#d4d8d7]">
          <div className="absolute -top-[3px] left-[74px] h-[6px] w-[6px] rounded-full border border-black bg-white" />
          1
        </div>
      </div>
    </div>
  );
}

function Tri() {
  return (
    <svg viewBox="0 0 8 6" className="h-[6px] w-[8px]"><path d="M0 0h8L4 6z" fill="#eef2f1" /></svg>
  );
}

function DockTab({ children, active }: { children: React.ReactNode; active?: boolean }) {
  return (
    <div className={"flex h-[18px] items-center gap-[4px] px-[8px] " + (active ? "bg-[#8b9a9c] font-bold text-[#222]" : "bg-[#333] text-[#909090]")}>
      <svg viewBox="0 0 12 12" className="h-[11px] w-[11px] fill-none stroke-current"><path d="M.5.5h11v11H.5zM3 3l6 6M9 3l-6 6" /></svg>
      {children}
    </div>
  );
}

function Reaper() {
  return (
    <div className="relative flex h-[1402px] w-[2560px] flex-col overflow-hidden bg-[#333]">
      <div className="flex h-[29px] shrink-0 items-center bg-white text-[14.200px] text-[#999]">
        <ReaperLogo className="ml-[2px] h-[20px] w-[20px]" />
        <T className="ml-[6px] w-[444px]">12_OLD_ch36_2s [modified] - REAPER v7.09 - EVALUATION LICENSE</T>
        <div className="flex-1" />
        <WinButtons className="mr-[26px]" />
      </div>
      <div className="flex h-[25px] shrink-0 items-center border-b border-[#d8d8d8] bg-white text-[14.200px] text-[#666]">
        <T className="ml-[7px] w-[23px]">File</T>
        <T className="ml-[14px] w-[26px]">Edit</T>
        <T className="ml-[14px] w-[32px]">View</T>
        <T className="ml-[14px] w-[36px]">Insert</T>
        <T className="ml-[14px] w-[29px]">Item</T>
        <T className="ml-[15px] w-[34px]">Track</T>
        <T className="ml-[14px] w-[52px]">Options</T>
        <T className="ml-[14px] w-[49px]">Actions</T>
        <T className="ml-[14px] w-[32px]">Help</T>
        <T className="ml-[26px] w-[174px]">[Changed item properties]</T>
        <div className="flex-1" />
        <T className="mr-[8px] w-[140px]">[audio device closed]</T>
      </div>
      <div className="flex h-[902px] shrink-0">
        <div className="flex w-[755px] shrink-0 flex-col">
          <div className="flex h-[137px] shrink-0 items-start pl-[3px] pt-[53px]">
            <Tb><path d="M7 4h7l4 4v12H7zM14 4v4h4" /></Tb>
            <Tb><path d="M2 15h20v6H2zM12 13V2M8.500 6L12 2l3.500 4" /></Tb>
            <Tb><path d="M2 15h20v6H2z" fill="currentColor" /><path d="M12 1v10M8.500 8l3.500 4 3.500-4" /></Tb>
            <Tb><circle cx="12" cy="12" r="9.500" /><path d="M12 10v7M12 6v2M10 17h4" /></Tb>
            <Tb><path d="M3 6v10h8l-4-3c4-3 9-2 15 4-4-9-12-10-17-6z" fill="currentColor" stroke="none" /></Tb>
            <Tb><path d="M21 6v10h-8l4-3C13 10 8 11 2 17c4-9 12-10 17-6z" fill="currentColor" stroke="none" /></Tb>
            <Tb><path d="M8 21l2-11h4l2 11z" fill="currentColor" /><path d="M3 17A9 9 0 0 1 12 5a9 9 0 0 1 9 12M12 2v6" /></Tb>
            <div className="w-[15px] shrink-0" />
            <Tb><path d="M3 4h18v16H3z" fill="#5d5d5d" strokeDasharray="2 1.500" /></Tb>
            <div className="w-[15px] shrink-0" />
            <Tb on><path d="M2 4h4c6 0 6 16 13 16h3M22 4h-4C12 4 10 20 4 20H2" /></Tb>
            <Tb on><rect x="3" y="8" width="10" height="8" rx="4" /><rect x="11" y="8" width="10" height="8" rx="4" /></Tb>
            <Tb><path d="M3 4h4v4H3zM10 4h4v4h-4zM17 4h4v4h-4zM3 11h4v4H3zM17 11h4v4h-4zM3 18h4v4H3zM10 18h4v4h-4zM17 18h4v4h-4z" /><path d="M10 11h4v4h-4z" fill="currentColor" /></Tb>
            <Tb on><path d="M6 9l6-6 6 6M3 15h7v6H3zM14 15h7v6h-7zM8 18h8" /></Tb>
            <Tb on><path d="M4 3v19M9 3v19M14 3v19M20 3v19" strokeDasharray="5 1.500" /></Tb>
            <Tb on><path d="M8 5h5a7 7 0 0 1 0 14H8" strokeWidth="3.500" /><path d="M3 5h2M3 19h2" strokeWidth="3.500" /></Tb>
            <Tb on><path d="M5 11h14v10H5z" fill="currentColor" /><path d="M8 11V7a4 4 0 0 1 8 0v4" strokeWidth="2.500" /></Tb>
            <div className="w-[16px] shrink-0" />
            <Tb><path d="M1 2h11l11 20V10l-3-3-1 4-3-5-1 4-3-4 9 16z" fill="currentColor" stroke="none" /></Tb>
          </div>
          <TrackPanel />
        </div>
        <div className="mt-[137px] w-[8px] shrink-0 bg-[#2a2a2a]" />
        <div className="flex w-[1797px] shrink-0 flex-col">
          <div className="mt-[26px] flex h-[24px] w-[1791px] items-center bg-[#3c3c3c] pl-[10px]">
            <div className="mb-[2px] flex h-[16px] w-[16px] items-center justify-center rounded-[6px] border border-[#e05050] bg-[#b00000] text-[11px] leading-none text-[#ffc8b8]">3</div>
          </div>
          <div className="mt-[41px]"><Ruler /></div>
          <div className="flex">
            <Arrange />
            <div className="flex h-[765px] w-[21px] flex-col items-center bg-[#333] pt-[3px]">
              <RoundBtn className="h-[14px] w-[14px] bg-black"><svg viewBox="0 0 8 8" className="h-[6px] w-[6px]"><path d="M0 7h8L4 0z" fill="#bbb" /></svg></RoundBtn>
              <div className="mt-[8px] flex h-[665px] w-[13px] items-center justify-center rounded-[3px] bg-[#5a5a5a]">
                <div className="h-[2px] w-[8px] bg-[#2c2c2c]" />
              </div>
              <div className="flex-1" />
              <svg viewBox="0 0 12 12" className="h-[12px] w-[12px]"><path d="M4 0h4v12H4zM0 4h12v4H0z" fill="#999" /></svg>
              <div className="mb-[9px] mt-[12px] h-[4px] w-[11px] rounded-[1px] bg-[#a0a0a0]" />
            </div>
          </div>
        </div>
      </div>
      <div className="flex h-[428px] shrink-0">
        <div className="flex w-[1400px] flex-col border-t border-[#4e4e4e]">
          <div className="flex h-[21px] shrink-0 items-center pl-[2px] text-[12px] text-[#8a8a8a]">
            <T className="w-[313px]">noise_1000sec.wav [start] 1.1.00 [end] 16.1.00 [len] 15.0</T>
          </div>
          <div className="flex h-[42px] shrink-0 items-center pl-[9px]">
            <RoundBtn className="h-[24px] w-[24px]"><svg viewBox="0 0 8 8" className="h-2 w-2"><path d="M0 0h2v8H0zM8 0v8L2 4z" fill="#aaa" /></svg></RoundBtn>
            <RoundBtn className="ml-[2px] h-[24px] w-[24px]"><svg viewBox="0 0 8 8" className="h-2 w-2"><path d="M6 0h2v8H6zM0 0v8l6-4z" fill="#aaa" /></svg></RoundBtn>
            <RecDot className="ml-[6px] h-[28px] w-[28px]" />
            <RoundBtn className="ml-[2px] h-[28px] w-[28px] bg-[linear-gradient(#9fa5a3,#c4aab2)]"><svg viewBox="0 0 10 10" className="h-[10px] w-[10px]"><path d="M0 0v10l10-5z" fill="#222" /></svg></RoundBtn>
            <div className="ml-px flex h-[22px] w-[22px] shrink-0 items-center justify-center rounded-full border border-[#161616] bg-[#17b57e]"><svg viewBox="0 0 14 14" className="h-[13px] w-[13px] fill-none stroke-white stroke-2"><path d="M2 9a5 5 0 0 1 7-6.500M12 5a5 5 0 0 1-7 6.500" /></svg></div>
            <RoundBtn className="ml-[9px] h-[24px] w-[24px]"><div className="h-[8px] w-[8px] bg-[#aaa]" /></RoundBtn>
            <RoundBtn className="ml-[2px] h-[24px] w-[24px]"><div className="flex gap-[3px]"><div className="h-[8px] w-[3px] bg-[#aaa]" /><div className="h-[8px] w-[3px] bg-[#aaa]" /></div></RoundBtn>
            <T className="ml-[15px] w-[92px] text-[20px] font-bold text-[#a8a8a8]">101.1.00</T>
          </div>
          <Mixer />
        </div>
        <div className="flex-1" />
        <div className="flex w-[170px] flex-col">
          <div className="flex h-[20px] items-center">
            <RoundBtn className="ml-[83px] h-[14px] w-[14px] bg-black"><svg viewBox="0 0 8 8" className="h-[6px] w-[6px]"><path d="M1 0v8l7-4z" fill="#bbb" /></svg></RoundBtn>
            <svg viewBox="0 0 12 12" className="ml-[8px] h-[12px] w-[12px]"><path d="M4 0h4v12H4zM0 4h12v4H0z" fill="#999" /></svg>
            <div className="ml-[14px] h-[4px] w-[12px] rounded-[1px] bg-[#a0a0a0]" />
          </div>
          <div className="flex h-[42px] items-center">
            <div className="flex h-[35px] w-[59px] flex-col items-end justify-between rounded-[3px] bg-[#262626] p-[5px] text-[9px] leading-none text-[#aaa]">
              <span className="mr-[2px]">GLOBAL</span>
              <div className="flex h-[12px] w-[12px] items-center justify-center rounded-full bg-[#999]"><svg viewBox="0 0 8 6" className="h-[5px] w-[7px]"><path d="M0 0h8L4 6z" fill="#333" /></svg></div>
            </div>
            <div className="ml-[10px] flex h-[32px] w-[32px] justify-center rounded-full bg-[#232323]"><div className="mt-[2px] h-[13px] w-px bg-[#bbb]" /></div>
            <div className="ml-[19px] flex w-[28px] flex-col items-center gap-[6px] text-[11px] text-[#b4b4b4]">
              <T className="w-[28px]">Rate:</T>
              <T className="w-[15px]">1.0</T>
            </div>
          </div>
        </div>
      </div>
      <div className="flex h-[18px] shrink-0 items-center bg-[#3c3c3c] font-['Liberation_Sans',sans-serif] text-[12px] leading-none">
        <span className="ml-[4px] w-[6px] text-[#ddd]">!</span>
        <DockTab active><T className="w-[37px]">Mixer</T></DockTab>
        <DockTab><T className="w-[73px]">Performance</T></DockTab>
        <div className="w-[12px] bg-[#333]" />
        <DockTab><T className="w-[84px]">Routing Matrix</T></DockTab>
      </div>
      {/* project marker line and edit cursor */}
      <div className="absolute left-[773px] top-[92px] h-[260px] w-px bg-[#a01818]" />
      <div className="absolute left-[1535px] top-[130px] h-[220px] w-px bg-[#35917d]" />
      <svg viewBox="0 0 20 10" className="absolute left-[1525px] top-[127px] h-[10px] w-[21px]"><path d="M.5.5h19L10 9.500z" fill="#2a6e62" stroke="#8aa" /></svg>
    </div>
  );
}

/* --------------------------------------------------- classic dialog parts */

function Btn({ children, className = "", off, main }: Kids & { off?: boolean; main?: boolean }) {
  return (
    <div
      className={
        "flex shrink-0 items-center justify-center whitespace-nowrap " +
        (main ? "border-2 border-[#0078d7] " : "border border-[#adadad] ") +
        (off ? "bg-[#cccccc] text-[#8a8a8a] " : "bg-[#e1e1e1] text-black ") +
        className
      }
    >
      {children}
    </div>
  );
}

function Combo({ children, className = "" }: Kids) {
  return (
    <div className={"flex shrink-0 items-center justify-between border border-[#adadad] bg-[#e3e3e3] pl-[4px] pr-[5px] text-black " + className}>
      <span className="leading-none">{children}</span>
      <Chevron className="h-[11px] w-[11px] text-[#444]" />
    </div>
  );
}

function Check({ off, className = "" }: { off?: boolean; className?: string }) {
  return <div className={"h-4 w-4 shrink-0 border bg-white " + (off ? "border-[#ccc] " : "border-[#333] ") + className} />;
}

/* Group frame with its caption set into the top edge. */
function Frame({ caption, className = "", children }: Kids & { caption?: string }) {
  return (
    <div className={"relative shrink-0 border border-[#dcdcdc] " + className}>
      {caption && <span className="absolute -top-[7px] left-[7px] bg-[#f0f0f0] px-[2px] leading-[13px]">{caption}</span>}
      {children}
    </div>
  );
}

function RenderDialog() {
  return (
    <div className="flex h-[835px] w-[672px] flex-col bg-[#f0f0f0] font-['Liberation_Sans',sans-serif] text-[13px] text-black shadow-[0_4px_14px_rgba(0,0,0,0.5)]">
      <div className="flex h-[31px] shrink-0 items-center bg-white font-['Open_Sans',sans-serif] text-[14.200px] text-[#999]">
        <ReaperLogo className="ml-[3px] h-[20px] w-[20px]" />
        <T className="ml-[5px] w-[92px]">Render to File</T>
        <div className="flex-1" />
        <svg viewBox="0 0 12 12" className="mr-[15px] h-3 w-3 stroke-current"><path d="M0 0l12 12M12 0L0 12" /></svg>
      </div>
      <div className="mt-[14px] flex h-[24px] shrink-0 items-center">
        <T className="ml-[14px] w-[46px]">Source:</T>
        <Combo className="ml-[10px] h-[24px] w-[240px]"><T className="w-[65px]">Master mix</T></Combo>
        <T className="ml-[8px] w-[50px]">Bounds:</T>
        <Combo className="ml-[12px] h-[24px] w-[190px]"><T className="w-[79px]">Entire project</T></Combo>
        <Btn className="ml-[7px] mt-px h-[22px] w-[80px]"><T className="w-[46px]">Presets</T></Btn>
      </div>
      <Frame caption="Time bounds" className="ml-[14px] mt-[14px] flex h-[48px] w-[644px] items-center pb-[2px]">
        <Check className="ml-[473px] mt-[2px]" />
        <T className="ml-[4px] mt-[2px] w-[25px]">Tail:</T>
        <div className="ml-[15px] mt-[2px] flex h-[24px] w-[62px] items-center border border-[#ccc] pl-[4px] text-[#888]"><T className="w-[28px]">1000</T></div>
        <T className="ml-[8px] mt-[2px] w-[17px]">ms</T>
      </Frame>
      <Frame caption="Output" className="ml-[14px] mt-[14px] flex h-[110px] w-[644px] flex-col pt-[13px]">
        <div className="flex h-[24px] items-center">
          <div className="ml-[64px] flex h-[24px] w-[473px] items-center justify-end border border-[#7a7a7a] bg-white pr-[2px]">C:\Users\cimil\Develop\SPARTA\MEASURES\PAPER_PERF<T className="w-[125px]">\Media\output\64spl</T></div>
          <Btn className="ml-[7px] h-[24px] w-[86px]"><T className="w-[53px]">Browse...</T></Btn>
        </div>
        <div className="mt-[8px] flex h-[24px] items-center">
          <div className="ml-[64px] h-[24px] w-[473px] border border-[#7a7a7a] bg-white" />
          <Btn className="ml-[7px] h-[24px] w-[86px]"><T className="w-[60px]">Wildcards</T></Btn>
        </div>
        <div className="mt-[8px] flex h-[24px] items-center">
          <div className="ml-[64px] flex h-[24px] w-[473px] items-center justify-end border border-[#7a7a7a] bg-[#f0f0f0] pr-[2px]">12_OLD_ch36_2s---202<T className="w-[129px]">5-01-16 17_01_03.wav</T></div>
          <Btn off className="ml-[7px] h-[24px] w-[86px]"><T className="w-[26px]">1 file</T></Btn>
        </div>
      </Frame>
      <Frame caption="Options" className="ml-[14px] mt-[12px] flex h-[234px] w-[644px] flex-col pt-[13px]">
        <div className="flex h-[24px] items-center">
          <div className="ml-[350px] h-[24px] w-[61px] border border-[#adadad]" />
          <Combo className="ml-[50px] h-[24px] w-[170px]"><T className="w-[103px]">Full-speed Offline</T></Combo>
        </div>
        <div className="mt-[12px] flex h-[18px] items-center">
          <Check className="ml-[406px]" />
          <T className="ml-[4px] w-[98px]">2nd pass render</T>
        </div>
        <div className="mt-[9px] flex h-[24px] items-center">
          <Combo className="ml-[250px] h-[24px] w-[199px]" />
          <Btn className="ml-[13px] h-[24px] w-[168px]"><T className="w-[127px]">Normalize/Limit/Fade</T></Btn>
        </div>
        <div className="mt-[8px] flex h-[20px] items-center">
          <div className="w-[419px] text-right">Dither master</div>
          <Check off className="ml-[62px]" />
          <T className="ml-[4px] w-[73px] text-[#888]">Dither stems</T>
        </div>
        <div className="mt-[2px] flex h-[20px] items-center">
          <div className="w-[461px] text-right">Noise shape master</div>
          <Check off className="ml-[20px]" />
          <T className="ml-[4px] w-[116px] text-[#888]">Noise shape stems</T>
        </div>
        <div className="mt-[6px] flex h-[20px] items-center"><div className="w-[523px] text-right text-[#888]">Embed stretch markers</div></div>
        <div className="flex h-[22px] items-center"><div className="w-[510px] text-right text-[#888]">Embed take markers</div></div>
        <div className="mt-[5px] flex h-[24px] items-center">
          <div className="w-[497px] text-right">Embed new metadata</div>
          <Btn off className="ml-[39px] h-[24px] w-[94px]"><T className="w-[65px]">Metadata...</T></Btn>
        </div>
      </Frame>
      <Frame className="ml-[14px] mt-[29px] flex h-[143px] w-[641px] flex-col border-r-white pt-[11px]">
        <Combo className="ml-[250px] h-[24px] w-[248px]" />
        <Combo className="ml-[250px] mt-[8px] h-[24px] w-[286px]"><span className="ml-[90px]">WAV/RF64</span></Combo>
        <div className="mt-[9px] flex h-[20px] items-center"><div className="w-[445px] text-right">Write BWF data</div></div>
        <div className="mt-[6px] flex h-[20px] items-center"><div className="w-[419px] text-right">Embed tempo</div></div>
      </Frame>
      <div className="mt-[13px] flex h-[20px] items-center"><div className="w-[631px] text-right">Add rendered items to new tracks in project</div></div>
      <div className="mt-[4px] flex h-[20px] items-center"><div className="w-[608px] text-right">Save copy of project to outfile.wav.RPP</div></div>
      <div className="mt-[3px] flex h-[20px] items-center"><div className="w-[549px] text-right">Save outfile.render_stats.html</div></div>
      <div className="mt-[10px] flex h-[26px] shrink-0 items-center">
        <Btn className="ml-[330px] h-[26px] w-[164px] justify-end pr-[22px]">Dry run (no output)</Btn>
        <Btn className="ml-[10px] h-[26px] w-[158px]"><T className="w-[75px]">Render 1 file</T></Btn>
      </div>
      <div className="mt-[10px] flex h-[26px] shrink-0 items-center">
        <Btn className="ml-[445px] h-[26px] w-[84px]"><T className="w-[42px]">Cancel</T></Btn>
        <Btn off className="ml-[10px] h-[26px] w-[118px]"><T className="w-[82px]">Save Settings</T></Btn>
      </div>
    </div>
  );
}

const scaleMarks: [string, string][] = [
  ["-60", "w-[29px] text-[#7d9f9b]"],
  ["-54", "w-[58.500px] text-[#7d9f9b]"],
  ["-48", "w-[58.500px] text-[#86a6a2]"],
  ["-42", "w-[58.500px] text-[#92b0ab]"],
  ["-36", "w-[58.500px] text-[#a0bab5]"],
  ["-30", "w-[58.500px] text-[#b0c6bd]"],
  ["-24", "w-[58.500px] text-[#c0d4ca]"],
  ["-18", "w-[58.500px] text-[#cfded5]"],
  ["-12", "w-[58.500px] text-[#dde8e0]"],
  ["-6", "w-[55px] text-[#eaf2ea]"],
];
const peaks = [
  "-17.0", "-23.1", "-25.6", "-19.5", "-22.0", "-27.1", "-24.7", "-26.5", "-22.7", "-22.0", "-26.3", "-27.8",
  "-26.9", "-24.8", "-27.8", ...Array.from({ length: 21 }, () => "-24.2"),
];

function FinishedDialog() {
  return (
    <div className="flex h-[694px] w-[891px] flex-col border border-[#777] bg-[#f0f0f0] font-['Liberation_Sans',sans-serif] text-[13px] text-black shadow-[0_6px_22px_rgba(0,0,0,0.55)]">
      <div className="flex h-[37px] shrink-0 items-center bg-white font-['Open_Sans',sans-serif] text-[14.200px]">
        <ReaperLogo className="ml-[8px] h-[20px] w-[20px]" />
        <T className="ml-[5px] w-[212px]">Finished in 0:32    (0.9x realtime)</T>
        <div className="flex-1" />
        <svg viewBox="0 0 12 12" className="h-3 w-3 stroke-black"><path d="M0 6h12" /></svg>
        <svg viewBox="0 0 12 12" className="ml-[47px] h-3 w-3 fill-none stroke-[#ccc]"><path d="M.5.5h11v11H.5z" /></svg>
        <svg viewBox="0 0 12 12" className="ml-[47px] mr-[23px] h-3 w-3 stroke-black"><path d="M0 0l12 12M12 0L0 12" /></svg>
      </div>
      <Frame caption="Output file" className="ml-[13px] mt-[22px] flex h-[76px] w-[863px] flex-col pt-[13px]">
        <div className="ml-[11px] flex h-[23px] w-[827px] shrink-0 items-center border border-[#0078d7] bg-[#f5efec] pl-[2px]">
          <div className="flex h-[19px] items-center bg-[#0078d7] text-white">
            <T className="w-[759px]">{"C:\\Users\\cimil\\Develop\\SPARTA\\MEASURES\\PAPER_PERF\\Media\\output\\64spl\\12_OLD_ch36_2s---2025-01-16 17_01_03.wav"}</T>
          </div>
        </div>
        <T className="ml-[295px] mt-[9px] w-[259px]">WAV: 24bit PCM, 48000Hz, 36ch, 40500kbps</T>
      </Frame>
      <Frame caption="Render status" className="ml-[13px] mt-[20px] flex h-[446px] w-[863px] flex-col pt-[17px]">
        <div className="ml-[25px] h-[16px] w-[811px] shrink-0 border border-[#5cc87a] bg-[#06b025]" />
        <T className="ml-[332px] mt-[14px] w-[186px]">Finished in 0:32   (0.9x realtime)</T>
        <div className="mt-[13px] flex items-center">
          <div className="flex w-[183px] justify-end"><T className="w-[65px]">Master mix</T></div>
          <div className="relative ml-[7px] flex h-[360px] w-[662px] shrink-0">
            <div className="w-[603px] bg-[linear-gradient(90deg,#004b47,#004f41_50%,#005a38_80%,#006133)]">
              {peaks.map((_, r) => (
                <div key={r} className="flex h-[10px] text-right text-[12px] leading-[10px]">
                  {scaleMarks.map(([v, cls]) => (
                    <span key={v} className={"shrink-0 " + cls}>{v}</span>
                  ))}
                </div>
              ))}
            </div>
            <div className="flex-1 bg-[#420c00] pr-[5px] text-right text-[12px] text-[#f0e0d8]">
              {peaks.map((p, r) => (
                <div key={r} className="h-[10px] leading-[10px]">{p}</div>
              ))}
            </div>
            <svg viewBox="2438 557 662 360" className="absolute inset-0 h-[360px] w-[662px] fill-none stroke-[#1fd0a0]">
              <path d="M2859.500 557v10M2787.500 577v10M2845.500 587v10M2819.500 597v10M2770.500 607v10M2775.500 627v10M2765.500 657v10M2760.500 667v20M2788.500 687v10M2796.500 707v210" />
            </svg>
          </div>
        </div>
      </Frame>
      <div className="mt-[23px] flex h-[26px] shrink-0 items-center">
        <T className="ml-[13px] w-[87px]">When finished:</T>
        <Check className="ml-[21px]" />
        <T className="ml-[3px] w-[131px]">Close render windows</T>
        <Check className="ml-[22px]" />
        <T className="ml-[3px] w-[131px]">Return to render setup</T>
        <Btn className="ml-[306px] h-[26px] w-[126px]"><T className="w-[72px]">Stats/Charts</T></Btn>
      </div>
      <div className="mt-[7px] flex h-[26px] shrink-0 items-center">
        <Btn className="ml-[14px] h-[26px] w-[126px]"><T className="w-[63px]">Launch file</T></Btn>
        <Btn className="ml-[6px] h-[26px] w-[142px]"><T className="w-[78px]">Open folder...</T></Btn>
        <Btn className="ml-[6px] h-[26px] w-[142px]"><T className="w-[99px]">Media Explorer...</T></Btn>
        <Btn main className="ml-[177px] h-[26px] w-[126px]"><T className="w-[31px]">Back</T></Btn>
        <Btn className="ml-[10px] h-[26px] w-[126px]"><T className="w-[34px]">Close</T></Btn>
      </div>
    </div>
  );
}

/* ---------------------------------------------------------- plugin window */

function Field({ children, className = "" }: Kids) {
  return <div className={"flex h-[25px] shrink-0 items-center border text-[15px] leading-none " + className}>{children}</div>;
}

function Dial() {
  return (
    <svg viewBox="-32 -32 64 64" className="h-[64px] w-[64px]">
      <path d="M0 0V-30A30 30 0 0 0 -18 26z" fill="#b4b4b4" />
      <path d="M0 0L-18 25A30.500 30.500 0 1 1 18 25z" fill="none" stroke="#c4c4c4" strokeWidth="1.500" />
    </svg>
  );
}

const infoRows: [string, string, string, string, string][] = [
  ["Block Size:", "64", "IR Length [s]:", "w-[122px]", "2"],
  ["Channels:", "36", "Filter Samplerate:", "w-[154px]", "48000"],
  ["Positions:", "3", "Host Samplerate:", "w-[149px]", "48000"],
];

function Plugin() {
  return (
    <div className="flex h-[626px] w-[1071px] flex-col border-2 border-b-[3px] border-[#b4bcc0] bg-[linear-gradient(#182f3d,#132a36_9%,#061519_20%,#010e11_35%,#010e11_75%,#0a2029_88%,#1b3547)] font-['DejaVu_Sans',sans-serif] text-white">
      <div className="flex h-[39px] shrink-0 items-center rounded-[4px] border-b-2 border-[#b4bcc0] bg-[linear-gradient(90deg,#031015,#031015_15%,#182f3d_60%)] pt-[2px]">
        <div className="flex w-[108px] justify-end text-[17px] font-bold leading-none">SPARTA|</div>
        <T className="ml-[3px] w-[102px] text-[17px] font-bold text-[#ff00ff]">6DoFconv</T>
        <T className="ml-[33px] mt-[8px] w-[223px] text-[12px]">Ver 1.0.0alpha, Build Date Apr  2 2024</T>
      </div>
      <div className="flex">
        <div className="ml-[9px] w-[487px] shrink-0 text-[14.500px] font-bold leading-none">
          <div className="flex h-[32px] items-center pt-[12px]">
            <div className="w-[148px] text-right">IR Dataset</div>
            <T className="ml-[10px] w-[93px] text-[12px] font-normal">SOFA file loaded</T>
          </div>
          <div className="flex h-[214px] flex-col border border-[#45575e] bg-[#0f1b20] font-normal">
            <div className="flex h-[34px] shrink-0 items-center border-b border-[#5a6a70]">
              <div className="flex h-[25px] w-[442px] items-center rounded-[3px] border border-[#77858a] bg-[#19262b]">
                <div className="flex w-[88px] justify-end whitespace-nowrap text-[14px]">C:\Users\f</div>
                <T className="w-[306px] text-[14px]">arina-proj\MATRICES(hrtf-and-SOFA)\SOFA\creat...</T>
                <Chevron className="ml-[14px] h-[18px] w-[19px]" d="M0 4l6 4 6-4" />
              </div>
              <div className="ml-px flex h-[25px] w-[37px] items-center justify-center rounded-r-full border border-[#cfd5d8] text-[13px]">...</div>
            </div>
            <div className="flex h-[103px] shrink-0 flex-col gap-[2px] border-b border-[#5a6a70] pt-[11px]">
              {infoRows.map(([a, av, b, bw, bv]) => (
                <div key={b} className="flex h-[25px] items-center">
                  <div className="w-[150px] text-right font-bold">{a}</div>
                  <Field className="ml-[6px] w-[74px] border-[#45545a] pl-[6px]">{av}</Field>
                  <div className="ml-[18px] w-[154px] font-bold"><T className={bw}>{b}</T></div>
                  <Field className="w-[75px] border-[#45545a] pl-[6px]">{bv}</Field>
                </div>
              ))}
            </div>
            <div className="mt-[10px] flex h-[20px] items-center font-bold">
              <span className="ml-[192px] w-[10px]">x</span>
              <span className="ml-[58px] w-[10px]">y</span>
              <span className="ml-[58px] w-[10px]">z</span>
            </div>
            <div className="mt-[9px] flex h-[25px] items-center">
              <div className="w-[149px] text-right font-bold">Position:</div>
              <Field className="ml-[17px] w-[60px] justify-center border-[#6a7a80] text-[#8d989c]">1.5</Field>
              <Field className="ml-[10px] w-[60px] justify-center border-[#6a7a80] text-[#8d989c]">-1.0</Field>
              <Field className="ml-[10px] w-[60px] justify-center border-[#6a7a80] text-[#8d989c]">1.6</Field>
            </div>
          </div>
          <div className="flex h-[33px] items-center pl-[122px] pt-[9px]"><T className="w-[244px]">Target Listener Position [m]</T></div>
          <div className="flex h-[108px] border border-[#45575e] bg-[#0e1a1e]">
            <div className="w-[398px] border-r border-[#45575e] pt-[8px]">
              <div className="flex h-[20px] items-center">
                <span className="ml-[192px] w-[10px]">x</span>
                <span className="ml-[58px] w-[10px]">y</span>
                <span className="ml-[58px] w-[10px]">z</span>
              </div>
              <div className="mt-[6px] flex h-[25px] items-center">
                <div className="w-[146px] text-right">Position:</div>
                <Field className="ml-[20px] w-[60px] justify-center border-[#8a9599] font-normal text-[#8d989c]">0.000</Field>
                <Field className="ml-[10px] w-[60px] justify-center border-[#8a9599] bg-[linear-gradient(#0e1a1e_60%,#2b4a60)] font-normal">-1.773</Field>
                <Field className="ml-[10px] w-[60px] justify-center border-[#5b6c74] bg-[#3d4f58] font-normal text-[#9aa7ad]">1.000</Field>
              </div>
              <div className="mt-[5px] flex h-[25px] items-center">
                <div className="w-[127px] text-right">Index:</div>
                <Field className="ml-[109px] w-[60px] border-[#6a7a80] pl-[6px] font-normal">0</Field>
              </div>
            </div>
            <div className="flex flex-1 flex-col items-center bg-[#1a272c] pt-[24px]">
              <T className="w-[57px] text-[11px]">OSC Port</T>
              <Field className="mt-[14px] h-[27px] w-[53px] justify-center border-[#45545a] text-[13.500px] font-normal">9000</Field>
            </div>
          </div>
          <div className="flex h-[40px] items-center justify-end pr-[79px] pt-[12px]">
            <T className="w-[328px]">Ambisonic Sound-Field Rotation [de...</T>
          </div>
          <div className="flex h-[144px] border border-[#45575e] bg-[#0c1a20]/60">
            <div className="w-[216px] shrink-0 border-r border-[#5a6a70] text-right">
              <div className="pr-[36px] pt-[11px]">Enable Rotation</div>
              <div className="ml-[97px] mt-[12px] flex h-[20px] w-[20px] items-center justify-center rounded-full border border-[#777] bg-[#2a3439]">
                <svg viewBox="0 0 12 12" className="h-[13px] w-[13px] fill-none stroke-white stroke-2"><path d="M2 5l3 5 5-10" /></svg>
              </div>
              <div className="mt-[9px] whitespace-nowrap pr-[17px] text-[11.500px] leading-[20px]">(Note that this rotation is</div>
              <div className="whitespace-nowrap pr-[21px] text-[11.500px] leading-[20px]">suitable if you have</div>
              <div className="whitespace-nowrap pr-[29px] text-[11.500px] leading-[20px]">Ambisonic IRs)</div>
            </div>
            {[["Yaw", "/ypr[0]"], ["Pitch", "/ypr[1]"], ["Roll", "/ypr[2]"]].map(([n, o], i) => (
              <div key={n} className={"flex w-[73px] shrink-0 flex-col items-center " + (i ? "ml-[6px]" : "ml-[21px]")}>
                <div className="mt-[10px] flex items-center whitespace-nowrap text-[11.500px]">
                  {n}
                  <T className="ml-[2px] w-[37px] text-[11px] font-normal">{o}</T>
                </div>
                <div className="mt-[5px]"><Dial /></div>
                <Field className="-mt-[1px] h-[19px] w-[73px] justify-center border-[#a5b0b4] font-normal">0.00</Field>
                <div className="mt-[5px] flex items-center gap-[6px] text-[13px]">
                  <span>+/-</span>
                  <div className="h-[17px] w-[18px] rounded-full border border-[#666] bg-[#252f33]" />
                </div>
              </div>
            ))}
          </div>
        </div>
        <div className="ml-[10px] w-[550px] shrink-0">
          <div className="flex h-[31px] items-center">
            <T className="ml-[179px] mt-[12px] w-[180px] text-[15px] font-bold">Coordinate View [m]</T>
            <div className="ml-[75px] mt-[3px] flex h-[20px] w-[115px] items-center rounded-[3px] border border-[#9aa6ac]">
              <T className="ml-[6px] w-[65px] text-[13px]">Side View</T>
              <Chevron className="ml-[10px] h-[16px] w-[19px]" d="M0 4l6 4 6-4" />
            </div>
          </div>
          <svg viewBox="3785 524 550 542" className="h-[542px] w-[550px] border border-[#4e6169] bg-[linear-gradient(#1e303a,#132225_22%,#132225_68%,#24394a)]">
            <path d="M3798 541h384v44h-384z" fill="#16262a" />
            {Array.from({ length: 14 }, (_, i) => (
              <path key={i} d={`M${3823.2 + i * 25.6} 541v44`} stroke={i === 4 || i === 9 ? "#8a9696" : "#31474a"} />
            ))}
            <path d="M3798 560h384" stroke="#31474a" />
            <path d="M3798 540.500h383v45h-383z" fill="none" stroke="#d2d6da" strokeWidth="2" />
            <g fontSize="12.500" fill="#a4aeb1" textAnchor="middle">
              <text x="3804" y="602">3.6</text>
              <text x="3931" y="602">1.6</text>
              <text x="4059" y="602">-0.4</text>
              <text x="4187" y="602">-2.4</text>
              <text x="4200" y="589">1.2</text>
              <text x="4007" y="620">Y</text>
            </g>
            <circle cx="3836" cy="566" r="7.500" fill="#115355" stroke="#2a6c6c" />
            <circle cx="4028" cy="566" r="7.500" fill="#114548" stroke="#2a5f60" />
            <circle cx="4092" cy="560" r="6.500" fill="#f0f" stroke="#f8b8f8" />
            <circle cx="4141" cy="598" r="6.500" fill="#ffa500" stroke="#ffd890" />
            <circle cx="4220" cy="566" r="9" fill="#0a8a0a" stroke="#b8e0b8" />
            <text x="4232" y="560" fontSize="14" fill="#fff" textAnchor="middle">0</text>
          </svg>
        </div>
      </div>
    </div>
  );
}

function PluginWindow() {
  return (
    <div className="flex h-[753px] w-[1356px] flex-col bg-[#f0f0f0] font-['Liberation_Sans',sans-serif] text-[13px] text-black shadow-[0_4px_14px_rgba(0,0,0,0.45)]">
      <div className="flex h-[62px] shrink-0 items-start bg-white">
        <div className="flex-1" />
        <svg viewBox="0 0 14 16" className="mt-[9px] h-[16px] w-[14px] fill-none stroke-[#888]"><path d="M3 .5h8M4 .5v5M10 .5v5M.5 9.500c0-3 2-4 3.500-4h6c1.500 0 3.500 1 3.500 4zM7 9.500V16" /></svg>
        <div className="ml-[40px] mr-px mt-[8px] h-[25px] w-[25px] bg-[#e8e8e8]" />
      </div>
      <div className="flex h-[31px] shrink-0 items-center justify-end pb-px">
        <div className="h-[24px] w-[1310px] border border-[#7a7a7a] bg-white" />
        <Btn className="ml-[7px] mr-[3px] h-[22px] w-[24px]">...</Btn>
      </div>
      <div className="flex h-[34px] shrink-0 items-center justify-end pb-[4px]">
        <Combo className="h-[24px] w-[1040px]" />
        <Btn className="ml-[7px] h-[22px] w-[22px]">+</Btn>
        <Btn className="ml-[6px] h-[22px] w-[58px]"><T className="w-[40px]">Param</T></Btn>
        <Btn className="ml-[6px] h-[22px] w-[98px]"><T className="w-[70px]">36/64 in+out</T></Btn>
        <Btn className="ml-[6px] h-[22px] w-[32px]"><T className="w-[13px]">UI</T></Btn>
        <Knob className="ml-[5px] h-[24px] w-[24px]" dir="M10 10l3 7" />
        <div className="ml-[6px] mr-[12px] flex h-[16px] w-[16px] items-center justify-center border border-[#333] bg-white">
          <svg viewBox="0 0 12 12" className="h-3 w-3 fill-none stroke-[#333] stroke-[1.5]"><path d="M1 6l3 3 7-8" /></svg>
        </div>
      </div>
      <div className="flex">
        <div className="flex w-[281px] shrink-0 items-end pb-[6px]">
          <T className="ml-[6px] w-[151px]">0.0%/0.0% CPU 512/512 spls</T>
        </div>
        <Plugin />
      </div>
    </div>
  );
}

/* ---------------------------------------------------------------- desktop */

function Tray() {
  const line = "h-5 w-5 fill-none stroke-white";
  return (
    <div className="flex items-center text-[14px] text-white">
      <Chevron className="h-[16px] w-[16px]" d="M0 9l6-6 6 6" />
      <svg viewBox="0 0 16 20" className="ml-[15px] h-[20px] w-[15px] fill-none">
        <rect width="16" height="20" rx="7" fill="#0a78f0" />
        <path d="M4 6l8 8-4 3.500v-15L12 6l-8 8" stroke="#fff" strokeWidth="1.300" />
      </svg>
      <svg viewBox="0 0 20 20" className="ml-[12px] h-5 w-5 fill-none stroke-white"><path d="M5 7h13v9H5zM1 3v4h4V3M3 7v6h3M19 10v3" /><path d="M7 9h9v5H7z" fill="#fff" /></svg>
      <svg viewBox="0 0 20 20" className={"ml-[10px] " + line}><path d="M1 7v6h3l5 5V2L4 7zM12 7c1.500 2 1.500 4 0 6" /><path d="M14.500 5c3 3 3 7 0 10M17 3c4 4 4 10 0 14" stroke="#777" /></svg>
      <svg viewBox="0 0 20 20" className={"ml-[10px] " + line}><circle cx="10" cy="10" r="9" /><path d="M1 10h18M10 1c-5 5-5 13 0 18M10 1c5 5 5 13 0 18M3 5h14M3 15h10" /><circle cx="16" cy="16" r="3.500" fill="#101010" /><path d="M13.500 13.500l5 5" /></svg>
      <svg viewBox="0 0 20 20" className={"ml-[10px] " + line}><path d="M1 4l18-3v16H1zM6 9a4 4 0 0 1 7-1M14 11a4 4 0 0 1-7 2" /><circle cx="15.500" cy="15.500" r="4.500" fill="#ff9a10" stroke="none" /></svg>
      <T className="ml-[14px] w-[28px]">ENG</T>
      <T className="ml-[17px] w-[33px]">17:01</T>
      <svg viewBox="0 0 20 20" className="ml-[24px] h-5 w-5"><path d="M0 0h20v17H4l-4 3z" fill="#fff" /><path d="M4 5h12M4 9h12M4 13h6" stroke="#101010" strokeWidth="1.500" /><circle cx="15.500" cy="15" r="4" fill="#101010" /><path d="M15 12.500a3 3 0 1 0 3 4 3 3 0 0 1-3-4z" fill="#fff" /></svg>
      <div className="ml-[25px] mr-[5px] h-full w-px bg-[#666]" />
    </div>
  );
}

export default function App() {
  return (
    <div className="relative h-[1317px] w-[4096px] overflow-hidden bg-black">
      <div className="relative h-[1441px] w-[4480px] bg-black font-['Open_Sans','Noto_Sans',sans-serif] [zoom:0.914286]">
        <div className="absolute left-0 top-[231px]"><Explorer /></div>
        <div className="absolute left-0 top-[1392px]">
          <Taskbar className="h-[39px] w-[1920px]">
            <div className="mr-[9px] flex items-center text-[14px] text-white"><T className="w-[34px]">17:01</T></div>
          </Taskbar>
        </div>
        <div className="absolute left-[1920px] top-0"><Reaper /></div>
        <div className="absolute left-[2996px] top-[326px]"><PluginWindow /></div>
        <div className="absolute left-[2705px] top-[228px]"><RenderDialog /></div>
        <div className="absolute left-[2233px] top-[327px]"><FinishedDialog /></div>
        <div className="absolute left-[1920px] top-[1402px]">
          <Taskbar className="h-[39px] w-[2560px]"><Tray /></Taskbar>
        </div>
      </div>
    </div>
  );
}
